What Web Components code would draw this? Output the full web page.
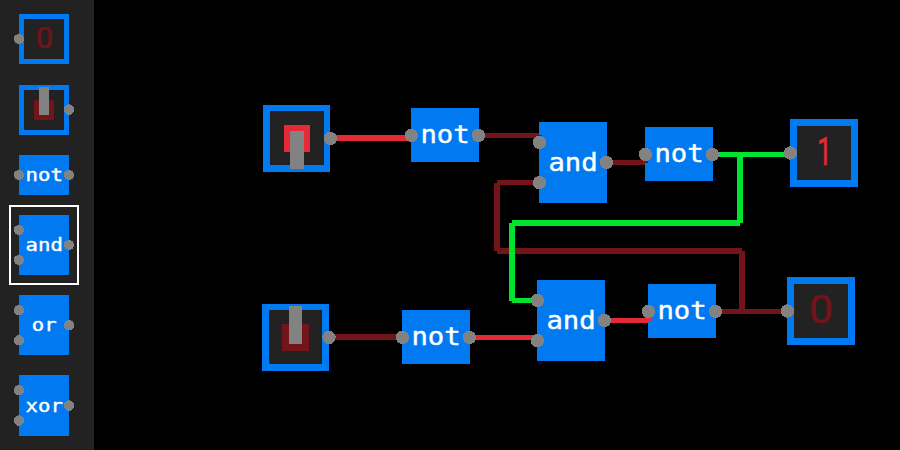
<!DOCTYPE html>
<html lang="en">
<head>
<meta charset="utf-8">
<title>Logic circuit editor</title>
<style>
html, body { margin: 0; height: 100%; background: #000; overflow: hidden; }
</style>
</head>
<body>
<circuit-app></circuit-app>
<script>
// Small round terminal; its centre may sit on a half pixel.
class CircuitPort extends HTMLElement {
  connectedCallback() {
    const r = +this.getAttribute('r');
    this.attachShadow({ mode: 'open' }).innerHTML = `
      <style>
        :host { position: absolute; z-index: 2; width: 0; height: 0; }
        svg { display: block; overflow: visible; width: 1px; height: 1px; }
      </style>
      <svg shape-rendering="crispEdges"><circle cx="${this.getAttribute('dx')}" cy="${this.getAttribute('dy')}" r="${r}" fill="#828282"/></svg>`;
  }
}
customElements.define('circuit-port', CircuitPort);

// Base part: a box, its content, and its ports ("x,y x,y").
class CircuitPart extends HTMLElement {
  connectedCallback() {
    const w = +this.getAttribute('w'), h = +this.getAttribute('h');
    const big = w > 60;
    const ports = this.getAttribute('ports').split(' ').map(p => {
      const [x, y] = p.split(',').map(Number);
      const fx = Math.floor(x), fy = Math.floor(y);
      return `<circuit-port r="${big ? 6.7 : 5.2}" dx="${x - fx}" dy="${y - fy}" style="left:${fx}px;top:${fy}px"></circuit-port>`;
    }).join('');
    this.attachShadow({ mode: 'open' }).innerHTML = `
      <style>
        :host { display: block; position: relative; flex: none; width: ${w}px; height: ${h}px; }
        :host([placed]) { position: absolute; }
        svg { display: block; width: 100%; height: 100%; }
        text { fill: #fff; stroke: #fff; stroke-width: .4px; font-family: "DejaVu Sans Mono", monospace; }
        text.digit { font-family: Roboto, sans-serif; stroke-width: .5px; }
      </style>
      <svg viewBox="0 0 ${w} ${h}">${this.body(w, h, big)}</svg>${ports}`;
  }
  frame(w, h) {
    const [l, t, r, b] = (this.getAttribute('inset') || '5,5,5,5').split(',').map(Number);
    return `<rect width="${w}" height="${h}" fill="#0079f1"/>
      <rect x="${l}" y="${t}" width="${w - l - r}" height="${h - t - b}" fill="#222"/>`;
  }
}

class LogicGate extends CircuitPart {
  body(w, h, big) {
    const s = this.getAttribute('label');
    const pitch = big ? 16.4 : 12.4;
    return `<rect width="${w}" height="${h}" fill="#0079f1"/>
      <text x="${w / 2 + (big ? 0 : .2)}" y="${this.getAttribute('base')}" text-anchor="middle"
        font-size="${big ? 24 : 18}" textLength="${pitch * s.length}" lengthAdjust="spacingAndGlyphs">${s}</text>`;
  }
}
customElements.define('logic-gate', LogicGate);

class OutputLamp extends CircuitPart {
  body(w, h, big) {
    const v = this.getAttribute('value'), on = v === '1';
    const x = on ? 34.5 : big ? 34 : 25.5;
    const len = on ? 15 : big ? 24 : 17.2;
    const c = on ? '#e62937' : '#73141b';
    return this.frame(w, h) + `<text class="digit" x="${x}" y="${big ? 46 : 34}" text-anchor="middle"
      textLength="${len}" lengthAdjust="spacingAndGlyphs"
      font-size="${big ? 38.5 : 29}" style="fill:${c};stroke:${c}">${v}</text>`;
  }
}
customElements.define('output-lamp', OutputLamp);

class InputSwitch extends CircuitPart {
  body(w, h) {
    const rect = (name, fill) => {
      const [x, y, a, b] = this.getAttribute(name).split(',');
      return `<rect x="${x}" y="${y}" width="${a}" height="${b}" fill="${fill}"/>`;
    };
    return this.frame(w, h) +
      rect('base', this.hasAttribute('on') ? '#e62937' : '#73141b') +
      rect('lever', '#828282');
  }
}
customElements.define('input-switch', InputSwitch);

class PartPalette extends HTMLElement {
  connectedCallback() {
    this.attachShadow({ mode: 'open' }).innerHTML = `
      <style>
        :host { display: flex; flex-direction: column; align-items: flex-start; gap: 20px;
          box-sizing: border-box; width: 94px; height: 450px; padding: 14px 0 0 19px;
          background: #222; overflow: hidden; }
        .first { margin-bottom: 1px; }
        .selected { outline: 2px solid #fff; outline-offset: 8px; }
      </style>
      <output-lamp class="first" w="50" h="50" value="0" ports="0,25"></output-lamp>
      <input-switch w="50" h="50" base="15,15,20,20" lever="20,2,10,28" ports="50,24.6"></input-switch>
      <logic-gate w="50" h="40" label="not" base="26" ports="0,20 50,20"></logic-gate>
      <logic-gate class="selected" w="50" h="60" label="and" base="36" ports="0,15 0,45 50,30"></logic-gate>
      <logic-gate w="50" h="60" label="or" base="36" ports="0,15.2 0,45.4 50,30.2"></logic-gate>
      <logic-gate w="50" h="61" label="xor" base="37" ports="0,15.2 0,45.6 50,30.6"></logic-gate>`;
  }
}
customElements.define('part-palette', PartPalette);

// Wires are stored as left, top, right, bottom in window coordinates.
const WIRES = [
  ['#e62937', [[330,135,411,141], [605,318,648,323], [645,314,651,321], [470,335,537,340]]],
  ['#73141b', [[479,133,539,138], [536,135,542,142], [607,160,645,165], [642,154,648,163],
    [329,334,402,340], [497,180,539,185], [494,183,500,251], [497,248,742,254],
    [739,251,745,311], [716,309,787,314]]],
  ['#00e430', [[713,152,790,157], [737,154,743,223], [512,220,740,226], [509,223,515,301], [512,298,537,303]]]
];

class WireLayer extends HTMLElement {
  connectedCallback() {
    const rects = WIRES.map(([c, list]) => `<g fill="${c}">` + list.map(([l, t, r, b]) =>
      `<rect x="${l}" y="${t}" width="${r - l}" height="${b - t}"/>`).join('') + '</g>').join('');
    this.attachShadow({ mode: 'open' }).innerHTML = `
      <style>
        :host { position: absolute; inset: 0; z-index: 1; }
        svg { display: block; width: 100%; height: 100%; }
      </style>
      <svg viewBox="94 0 806 450">${rects}</svg>`;
  }
}
customElements.define('wire-layer', WireLayer);

class CircuitBoard extends HTMLElement {
  connectedCallback() {
    const at = (x, y) => `placed style="left:${x - 94}px;top:${y}px"`;
    this.attachShadow({ mode: 'open' }).innerHTML = `
      <style>:host { display: block; position: relative; flex: 1; background: #000; }</style>
      <input-switch ${at(263,105)} w="67" h="67" on inset="7,6,6,7" base="21,20,26,27" lever="27,26,14,38" ports="67.4,33.4"></input-switch>
      <logic-gate ${at(411,108)} w="68" h="54" label="not" base="35" ports="0.4,27.4 67.4,27.4"></logic-gate>
      <logic-gate ${at(539,122)} w="68" h="81" label="and" base="49" ports="0.4,20.4 0.4,60.6 67.4,40.4"></logic-gate>
      <logic-gate ${at(645,127)} w="68" h="54" label="not" base="35" ports="0.4,27.4 67.4,27.4"></logic-gate>
      <output-lamp ${at(790,119)} w="68" h="68" inset="7,7,7,7" value="1" ports="0.4,34"></output-lamp>
      <input-switch ${at(262,304)} w="67" h="67" inset="7,6,7,7" base="20,20,27,27" lever="27,2,13,38" ports="67,33.4"></input-switch>
      <logic-gate ${at(402,310)} w="68" h="54" label="not" base="35" ports="0.4,27.4 67.4,27.4"></logic-gate>
      <logic-gate ${at(537,280)} w="68" h="81" label="and" base="49" ports="0.4,20.4 0.4,60.6 67.4,40.4"></logic-gate>
      <logic-gate ${at(648,284)} w="68" h="54" label="not" base="35" ports="0.4,27.4 67.4,27.4"></logic-gate>
      <output-lamp ${at(787,277)} w="68" h="68" inset="7,7,7,7" value="0" ports="0.4,34"></output-lamp>
      <wire-layer></wire-layer>`;
  }
}
customElements.define('circuit-board', CircuitBoard);

class CircuitApp extends HTMLElement {
  connectedCallback() {
    this.attachShadow({ mode: 'open' }).innerHTML = `
      <style>:host { display: flex; width: 900px; height: 450px; overflow: hidden; }</style>
      <part-palette></part-palette><circuit-board></circuit-board>`;
  }
}
customElements.define('circuit-app', CircuitApp);
</script>
</body>
</html>
